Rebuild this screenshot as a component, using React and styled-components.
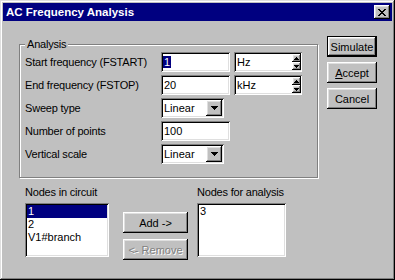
import React from "react";
import styled, { createGlobalStyle, css } from "styled-components";

const GlobalStyle = createGlobalStyle`
  html, body {
    margin: 0;
    padding: 0;
    background: #c0c0c0;
  }
  body {
    font-family: "Liberation Sans", Arial, sans-serif;
    font-size: 11px;
    color: #000;
  }
`;

const raised = css`
  box-shadow: inset -1px -1px 0 #000, inset 1px 1px 0 #fff,
    inset -2px -2px 0 #808080, inset 2px 2px 0 #dfdfdf;
`;

const sunken = css`
  box-shadow: inset 1px 1px 0 #808080, inset -1px -1px 0 #fff,
    inset 2px 2px 0 #000, inset -2px -2px 0 #dfdfdf;
`;

const closeRows = ["11000011", "01100110", "00111100", "00011000", "00111100", "01100110", "11000011"];

const CloseGlyph = () => (
  <svg width="8" height="7" viewBox="0 0 8 7" shapeRendering="crispEdges">
    {closeRows.map((row, y) =>
      row.split("").map((c, x) =>
        c === "1" ? <rect key={`${x}-${y}`} x={x} y={y} width="1" height="1" fill="#000" /> : null
      )
    )}
  </svg>
);

const Arrow = ({ dir = "down", w = 7 }) => {
  const h = Math.ceil(w / 2);
  const pts = dir === "down" ? `0,0 ${w},0 ${w / 2},${h}` : `0,${h} ${w},${h} ${w / 2},0`;
  return (
    <svg width={w} height={h} viewBox={`0 0 ${w} ${h}`} shapeRendering="crispEdges">
      <polygon points={pts} fill="#000" />
    </svg>
  );
};

const App = () => {
  return (
    <>
      <GlobalStyle />
      <Window>
        <TitleBar>
          <Title>AC Frequency Analysis</Title>
          <CloseBtn>
            <CloseGlyph />
          </CloseBtn>
        </TitleBar>
        <Body>
          <LeftCol>
            <Group>
              <Legend>Analysis</Legend>
              <FormGrid>
                <Label>Start frequency (FSTART)</Label>
                <TextField>
                  <Selected>1</Selected>
                </TextField>
                <UnitField>
                  <UnitText>Hz</UnitText>
                  <Spin>
                    <SpinHalf>
                      <Arrow dir="up" w={5} />
                    </SpinHalf>
                    <SpinHalf>
                      <Arrow dir="down" w={5} />
                    </SpinHalf>
                  </Spin>
                </UnitField>

                <Label>End frequency (FSTOP)</Label>
                <TextField>20</TextField>
                <UnitField>
                  <UnitText>kHz</UnitText>
                  <Spin>
                    <SpinHalf>
                      <Arrow dir="up" w={5} />
                    </SpinHalf>
                    <SpinHalf>
                      <Arrow dir="down" w={5} />
                    </SpinHalf>
                  </Spin>
                </UnitField>

                <Label>Sweep type</Label>
                <Combo>
                  <ComboValue>Linear</ComboValue>
                  <DropBtn>
                    <Arrow />
                  </DropBtn>
                </Combo>
                <span />

                <Label>Number of points</Label>
                <TextField>100</TextField>
                <span />

                <Label>Vertical scale</Label>
                <Combo>
                  <ComboValue>Linear</ComboValue>
                  <DropBtn>
                    <Arrow />
                  </DropBtn>
                </Combo>
                <span />
              </FormGrid>
            </Group>

            <NodesRow>
              <NodeCol>
                <Caption>Nodes in circuit</Caption>
                <ListBox $w={84}>
                  <Item $selected>1</Item>
                  <Item>2</Item>
                  <Item>V1#branch</Item>
                </ListBox>
              </NodeCol>
              <MoveCol>
                <Button $w={65}>Add -&gt;</Button>
                <Button $w={65} $disabled>
                  &lt;- Remove
                </Button>
              </MoveCol>
              <NodeCol>
                <Caption>Nodes for analysis</Caption>
                <ListBox $w={89}>
                  <Item>3</Item>
                </ListBox>
              </NodeCol>
            </NodesRow>
          </LeftCol>

          <ButtonCol>
            <Button $default>Simulate</Button>
            <Button>
              <u>A</u>ccept
            </Button>
            <Button>Cancel</Button>
          </ButtonCol>
        </Body>
      </Window>
    </>
  );
};

export default App;

const Window = styled.div`
  width: 395px;
  height: 280px;
  box-sizing: border-box;
  padding: 3px;
  background: #c0c0c0;
  display: flex;
  flex-direction: column;
  box-shadow: inset -1px -1px 0 #000, inset 1px 1px 0 #dfdfdf,
    inset -2px -2px 0 #808080, inset 2px 2px 0 #fff;
`;

const TitleBar = styled.div`
  height: 18px;
  background: #000080;
  display: flex;
  align-items: center;
  justify-content: space-between;
  padding: 0 2px 0 3px;
`;

const Title = styled.div`
  color: #fff;
  font-weight: bold;
  font-size: 11.5px;
`;

const CloseBtn = styled.div`
  width: 16px;
  height: 14px;
  background: #c0c0c0;
  display: flex;
  align-items: center;
  justify-content: center;
  ${raised}
`;

const Body = styled.div`
  display: flex;
  align-items: flex-start;
  gap: 9px;
  padding: 15px 0 0 16px;
`;

const LeftCol = styled.div`
  width: 299px;
  display: flex;
  flex-direction: column;
`;

const Group = styled.fieldset`
  margin: 2px 0 0 0;
  width: 299px;
  box-sizing: border-box;
  padding: 1px 5px 13px 5px;
  border: 1px solid #808080;
  box-shadow: inset 1px 1px 0 #fff, 1px 1px 0 #fff;
  min-width: 0;
`;

const Legend = styled.legend`
  padding: 0 2px;
  line-height: 13px;
  background: #c0c0c0;
  letter-spacing: -0.2px;
`;

const FormGrid = styled.div`
  display: grid;
  grid-template-columns: 132px 69px 68px;
  grid-auto-rows: 20px;
  column-gap: 4px;
  row-gap: 3px;
  align-items: center;
`;

const Label = styled.div`
  white-space: nowrap;
  letter-spacing: -0.2px;
`;

const field = css`
  height: 20px;
  box-sizing: border-box;
  background: #fff;
  ${sunken}
`;

const TextField = styled.div`
  ${field}
  display: flex;
  align-items: center;
  padding: 0 3px;
`;

const Selected = styled.span`
  background: #000080;
  color: #fff;
  padding: 0 1px;
  margin-left: -1px;
`;

const UnitField = styled.div`
  ${field}
  width: 68px;
  display: flex;
  align-items: stretch;
  padding: 2px 1px 2px 2px;
`;

const UnitText = styled.div`
  flex: 1;
  display: flex;
  align-items: center;
  padding-left: 1px;
`;

const Spin = styled.div`
  width: 9px;
  display: flex;
  flex-direction: column;
`;

const SpinHalf = styled.div`
  flex: 1;
  background: #c0c0c0;
  display: flex;
  align-items: center;
  justify-content: center;
  ${raised}
`;

const Combo = styled.div`
  ${field}
  width: 63px;
  display: flex;
  padding: 2px;
`;

const ComboValue = styled.div`
  flex: 1;
  display: flex;
  align-items: center;
  padding-left: 1px;
`;

const DropBtn = styled.div`
  width: 16px;
  height: 16px;
  background: #c0c0c0;
  display: flex;
  align-items: center;
  justify-content: center;
  ${raised}
`;

const NodesRow = styled.div`
  display: flex;
  align-items: flex-start;
  margin-top: 8px;
  padding-left: 6px;
`;

const NodeCol = styled.div`
  display: flex;
  flex-direction: column;
  gap: 4px;
`;

const Caption = styled.div`
  line-height: 13px;
  letter-spacing: -0.2px;
`;

const ListBox = styled.div`
  width: ${(p) => p.$w}px;
  height: 54px;
  box-sizing: border-box;
  background: #fff;
  padding: 2px;
  ${sunken}
`;

const Item = styled.div`
  line-height: 13px;
  padding-left: 1px;
  background: ${(p) => (p.$selected ? "#000080" : "transparent")};
  color: ${(p) => (p.$selected ? "#fff" : "#000")};
`;

const MoveCol = styled.div`
  display: flex;
  flex-direction: column;
  gap: 6px;
  margin: 26px 9px 0 14px;
`;

const ButtonCol = styled.div`
  width: 50px;
  display: flex;
  flex-direction: column;
  gap: 5px;
`;

const Button = styled.div`
  width: ${(p) => (p.$w ? `${p.$w}px` : "100%")};
  height: 21px;
  box-sizing: border-box;
  background: #c0c0c0;
  display: flex;
  align-items: center;
  justify-content: center;
  font-size: 11px;
  ${raised}
  ${(p) =>
    p.$default &&
    css`
      box-shadow: inset 0 0 0 1px #000, inset -2px -2px 0 #000, inset 2px 2px 0 #fff,
        inset -3px -3px 0 #808080, inset 3px 3px 0 #dfdfdf;
    `}
  ${(p) =>
    p.$disabled &&
    css`
      color: #808080;
      text-shadow: 1px 1px 0 #fff;
    `}
`;
